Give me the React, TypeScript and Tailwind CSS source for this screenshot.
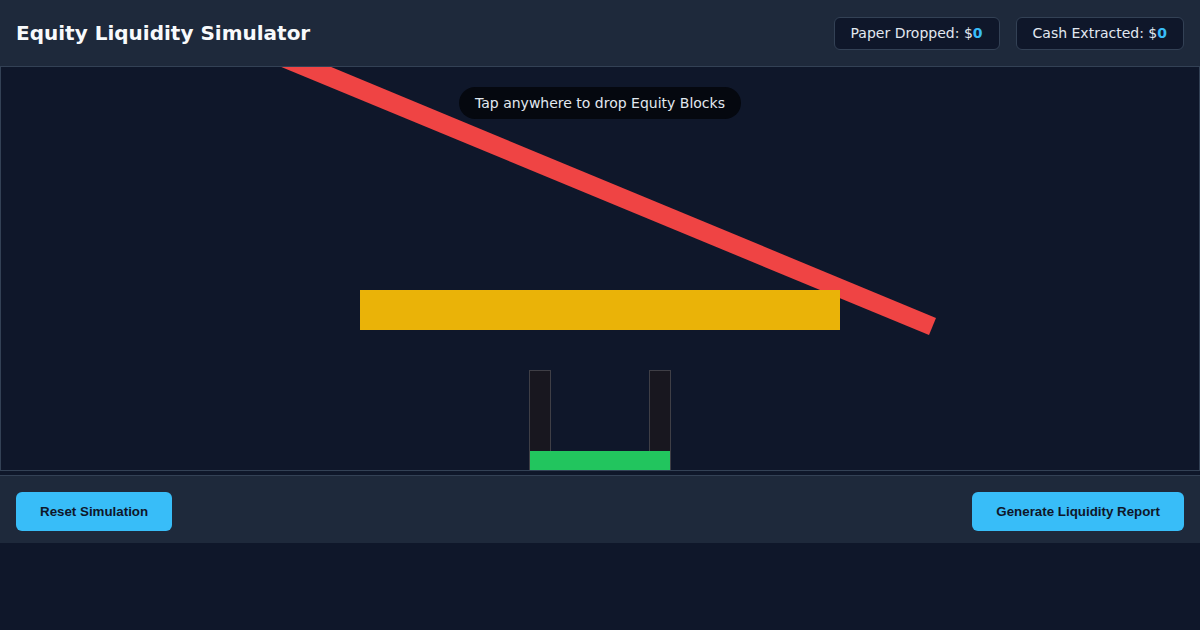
import React from "react";

function Stat({ label, value }: { label: string; value: number }) {
  return (
    <div className="rounded-md border border-[#334155] bg-[#0f172a] px-4 py-[6px] text-sm leading-[19px] text-[#e2e8f0]">
      {label}: $<span className="font-bold text-[#38bdf8]">{value}</span>
    </div>
  );
}

export default function App() {
  return (
    <div className="min-h-[630px] bg-[#0f172a] font-['DejaVu_Sans',sans-serif] text-white">
      <header className="flex h-[67px] items-center justify-between border-b border-[#334155] bg-[#1e293b] px-4">
        <h1 className="text-xl font-bold text-[#f8fafc]">Equity Liquidity Simulator</h1>
        <div className="flex gap-4">
          <Stat label="Paper Dropped" value={0} />
          <Stat label="Cash Extracted" value={0} />
        </div>
      </header>

      <div className="relative h-[404px] overflow-hidden border border-t-0 border-[#334155] bg-[#0f172a]">
        <svg className="absolute inset-0" width="1198" height="403" viewBox="0 0 1198 403">
          <polygon points="232,-20 282,-20 935,251 928,268" fill="#ef4444" />
          <rect x="359" y="223" width="480" height="40" fill="#eab308" />
          <rect x="528.5" y="303.5" width="21" height="101" fill="#18171f" stroke="#3f3f46" />
          <rect x="648.5" y="303.5" width="21" height="101" fill="#18171f" stroke="#3f3f46" />
          <rect x="529" y="384" width="140" height="21" fill="#22c55e" />
        </svg>
        <div className="absolute left-1/2 top-[20px] -translate-x-1/2 rounded-full bg-[#05080f] px-4 py-[6px] text-sm leading-[20px] whitespace-nowrap text-[#e2e8f0]">
          Tap anywhere to drop Equity Blocks
        </div>
      </div>

      <footer className="mt-[4px] flex items-center justify-between border-t border-[#334155] bg-[#1e293b] px-4 pt-4 pb-3">
        <button className="rounded-md bg-[#38bdf8] px-6 py-3 font-['Liberation_Sans',Arial,sans-serif] text-[13.33px] leading-[15px] font-bold text-[#0f172a]">
          Reset Simulation
        </button>
        <button className="rounded-md bg-[#38bdf8] px-6 py-3 font-['Liberation_Sans',Arial,sans-serif] text-[13.33px] leading-[15px] font-bold text-[#0f172a]">
          Generate Liquidity Report
        </button>
      </footer>
    </div>
  );
}
